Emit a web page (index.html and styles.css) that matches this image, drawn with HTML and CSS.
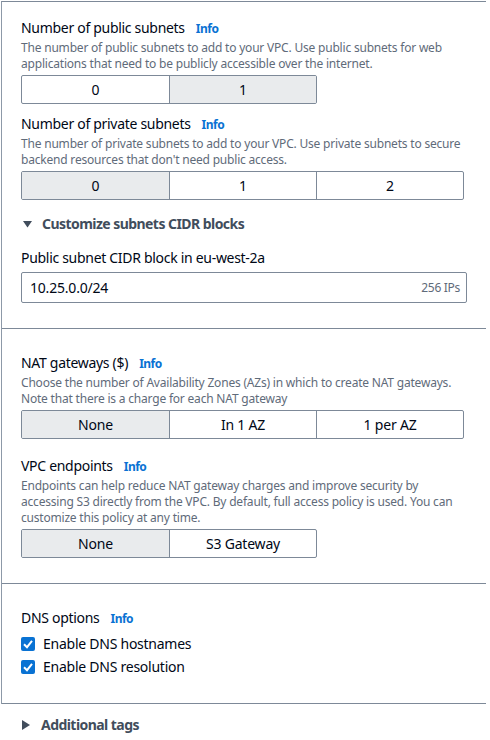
FILE: index.html
```html
<!DOCTYPE html>
<html>
<head>
<meta charset="utf-8">
<link rel="stylesheet" href="styles.css">
</head>
<body>
<div class="panel">
  <section class="sec sec-first">
    <div class="field">
      <div class="label">Number of public subnets<a class="info">Info</a></div>
      <div class="desc">The number of public subnets to add to your VPC. Use public subnets for web applications that need to be publicly accessible over the internet.</div>
      <div class="seg"><span class="opt">0</span><span class="opt on">1</span></div>
    </div>
    <div class="field field-next">
      <div class="label">Number of private subnets<a class="info">Info</a></div>
      <div class="desc">The number of private subnets to add to your VPC. Use private subnets to secure backend resources that don't need public access.</div>
      <div class="seg"><span class="opt on">0</span><span class="opt">1</span><span class="opt">2</span></div>
    </div>
    <div class="expander expander-open">
      <svg class="caret-down" width="9" height="7" viewBox="0 0 9 7"><polygon points="0,0 9,0 4.5,6.5" fill="#414d5c"/></svg>
      <span>Customize subnets CIDR blocks</span>
    </div>
    <div class="field-cidr">
      <div class="label plain">Public subnet CIDR block in eu-west-2a</div>
      <div class="input"><span class="val">10.25.0.0/24</span><span class="hint">256 IPs</span></div>
    </div>
  </section>
  <section class="sec">
    <div class="field">
      <div class="label">NAT gateways ($)<a class="info">Info</a></div>
      <div class="desc">Choose the number of Availability Zones (AZs) in which to create NAT gateways. Note that there is a charge for each NAT gateway</div>
      <div class="seg"><span class="opt on">None</span><span class="opt">In 1 AZ</span><span class="opt">1 per AZ</span></div>
    </div>
    <div class="field field-gap">
      <div class="label">VPC endpoints<a class="info">Info</a></div>
      <div class="desc">Endpoints can help reduce NAT gateway charges and improve security by accessing S3 directly from the VPC. By default, full access policy is used. You can customize this policy at any time.</div>
      <div class="seg"><span class="opt on">None</span><span class="opt">S3 Gateway</span></div>
    </div>
  </section>
  <section class="sec">
    <div class="field">
      <div class="label">DNS options<a class="info">Info</a></div>
      <div class="checks">
        <label class="check"><svg width="14" height="14" viewBox="0 0 14 14"><rect width="14" height="14" rx="2" fill="#0972d3"/><polyline points="3,7.2 6,10.2 11,3.8" fill="none" stroke="#fff" stroke-width="2"/></svg><span>Enable DNS hostnames</span></label>
        <label class="check"><svg width="14" height="14" viewBox="0 0 14 14"><rect width="14" height="14" rx="2" fill="#0972d3"/><polyline points="3,7.2 6,10.2 11,3.8" fill="none" stroke="#fff" stroke-width="2"/></svg><span>Enable DNS resolution</span></label>
      </div>
    </div>
  </section>
</div>
<div class="tags">
  <div class="expander">
    <svg class="caret-right" width="8" height="10" viewBox="0 0 8 10"><polygon points="0,0 8,5 0,10" fill="#414d5c"/></svg>
    <span>Additional tags</span>
  </div>
</div>
</body>
</html>
```

FILE: styles.css
```css
* { box-sizing: border-box; }
html, body { margin: 0; padding: 0; background: #fff; }
body {
  font-family: "Noto Sans", "Open Sans", Arial, sans-serif;
  color: #000716;
  font-size: 14px;
  line-height: 20px;
}
.panel {
  margin: 1px 0 0 1px;
  width: 485px;
  border-left: 1px solid #8d99a8;
  border-top: 1px solid #7d8998;
}
.sec {
  padding: 24px 20px 25px 19px;
  border-bottom: 1px solid #7d8998;
}
.sec-first { padding-top: 16px; }
.label {
  font-size: 14px;
  line-height: 20px;
  color: #000716;
  letter-spacing: -0.3px;
}
.info {
  margin-left: 11px;
  font-size: 12px;
  font-weight: 700;
  letter-spacing: -0.5px;
  color: #0972d3;
}
.desc {
  margin-top: 1px;
  font-size: 12px;
  line-height: 16px;
  color: #5f6b7a;
  width: 446px;
  letter-spacing: -0.2px;
}
.seg {
  margin-top: 3px;
  display: flex;
  width: max-content;
  border: 1px solid #7d8998;
  border-radius: 2px;
  overflow: hidden;
}
.opt {
  width: 147px;
  height: 27px;
  line-height: 27px;
  text-align: center;
  font-size: 14px;
  letter-spacing: -0.2px;
  color: #000716;
}
.opt + .opt { border-left: 1px solid #7d8998; }
.opt.on { background: #e9ebed; }
.field-next { margin-top: 10px; }
.field-gap { margin-top: 17px; }
.expander {
  display: flex;
  align-items: center;
  font-weight: 700;
  font-size: 14px;
  line-height: 20px;
  letter-spacing: -0.55px;
  color: #414d5c;
}
.expander-open { margin-top: 14px; }
.caret-down { margin: 0 10px 0 2px; }
.caret-right { margin: 0 11px 0 2px; }
.field-cidr { margin-top: 14px; }
.input {
  margin-top: 4px;
  width: 446px;
  height: 31px;
  border: 1px solid #7d8998;
  border-radius: 2px;
  display: flex;
  align-items: center;
  justify-content: space-between;
  padding: 0 6px 0 8px;
}
.val { font-size: 14px; color: #000716; letter-spacing: -0.2px; }
.hint { font-size: 12px; color: #5f6b7a; letter-spacing: -0.3px; }
.checks { margin-top: 4px; display: flex; flex-direction: column; gap: 1px; }
.check {
  display: flex;
  align-items: center;
  height: 22px;
  gap: 8px;
  font-size: 14px;
  letter-spacing: -0.25px;
}
.check svg { display: block; }
.tags { padding: 11px 20px 0 20px; }
```
